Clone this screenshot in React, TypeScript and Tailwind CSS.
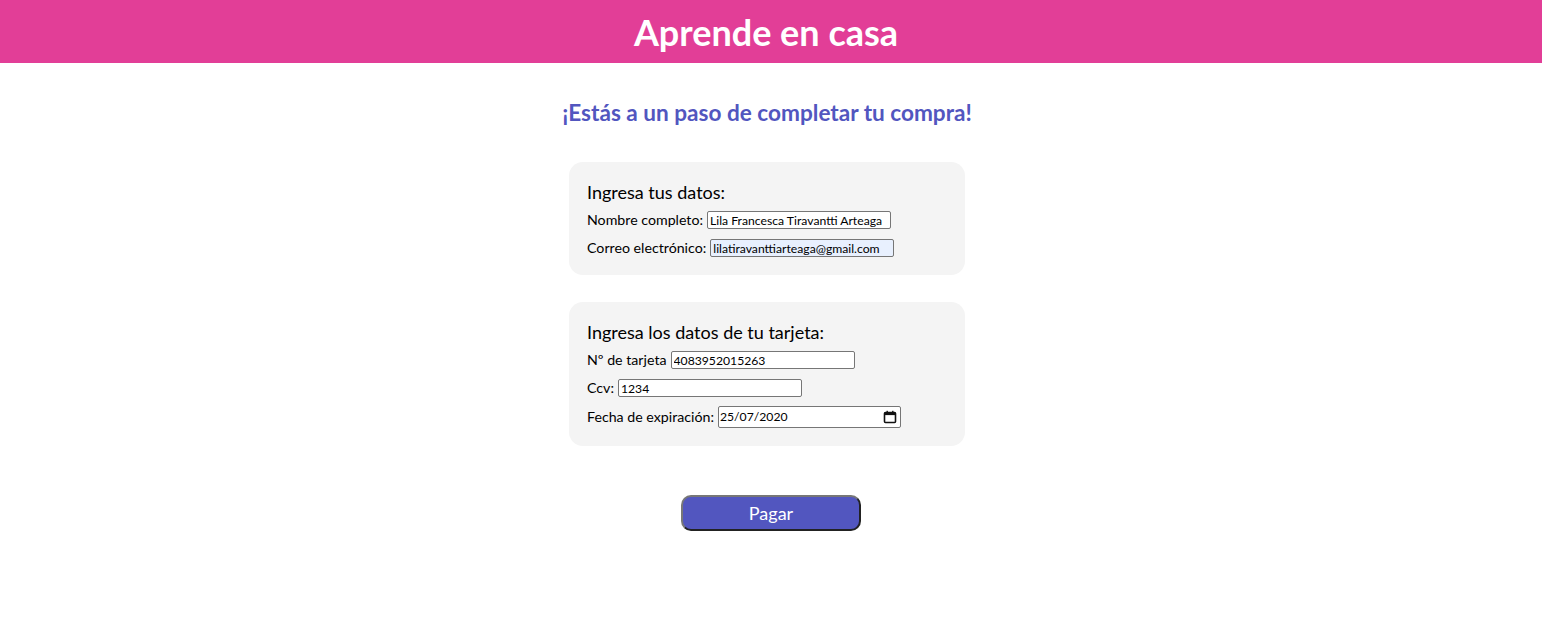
import React from "react";

const inputCls =
  "h-[18px] w-[184px] border border-[#767676] rounded-[2px] px-[2px] text-[12.2px] text-black outline-none leading-none";

function Row({ label, children, className = "" }: { label: string; children: React.ReactNode; className?: string }) {
  return (
    <div className={"flex items-center h-[28px] text-[14.2px] text-black " + className}>
      <span className="mr-[4px]">{label}</span>
      {children}
    </div>
  );
}

export default function App() {
  return (
    <div className="min-h-[621px] bg-white" style={{ fontFamily: "Lato, 'Open Sans', sans-serif" }}>
      <header className="h-[63px] bg-[#e23e97] flex items-center justify-center">
        <h1 className="text-[36px] font-bold text-white leading-none pr-[10px]">Aprende en casa</h1>
      </header>
      <div className="flex flex-col items-center pr-[8px]">
        <h2 className="mt-[35px] h-[30px] leading-[30px] text-[22.6px] font-bold text-[#5256bf]">
          ¡Estás a un paso de completar tu compra!
        </h2>
        <section className="mt-[34px] w-[396px] h-[113px] bg-[#f4f4f4] rounded-[14px] pl-[18px] pt-[18px]">
          <h3 className="text-[18px] leading-[24px] text-black">Ingresa tus datos:</h3>
          <Row label="Nombre completo:" className="mt-[2px]">
            <input readOnly className={inputCls + " bg-white"} defaultValue="Lila Francesca Tiravantti Arteaga" />
          </Row>
          <Row label="Correo electrónico:">
            <input readOnly className={inputCls + " bg-[#e8f0fe]"} defaultValue="lilatiravanttiarteaga@gmail.com" />
          </Row>
        </section>
        <section className="mt-[27px] w-[396px] h-[144px] bg-[#f4f4f4] rounded-[14px] pl-[18px] pt-[18px]">
          <h3 className="text-[18px] leading-[24px] text-black">Ingresa los datos de tu tarjeta:</h3>
          <Row label="Nº de tarjeta" className="mt-[2px]">
            <input readOnly className={inputCls + " bg-white"} defaultValue="4083952015263" />
          </Row>
          <Row label="Ccv:">
            <input readOnly className={inputCls + " bg-white"} defaultValue="1234" />
          </Row>
          <Row label="Fecha de expiración:" className="mt-[1px]">
            <div className="h-[22px] w-[183px] border border-[#767676] rounded-[2px] bg-white flex items-center justify-between pl-[1px] pr-[3px] text-[12.2px]">
              <span>25/07/2020</span>
              <svg width="14" height="14" viewBox="0 0 14 14" fill="none">
                <rect x="1.5" y="2.5" width="11" height="10" rx="1" stroke="#111" strokeWidth="1.6" />
                <rect x="1.5" y="2.5" width="11" height="2.6" fill="#111" />
                <rect x="3.5" y="0.8" width="1.4" height="2.5" fill="#111" />
                <rect x="9.1" y="0.8" width="1.4" height="2.5" fill="#111" />
              </svg>
            </div>
          </Row>
        </section>
      </div>
      <div className="flex justify-center mt-[49px]">
        <button className="w-[180px] h-[36px] rounded-[10px] bg-[#5256bf] text-white text-[18px] border-2 border-t-[#777777] border-l-[#777777] border-r-[#222222] border-b-[#222222]">
          Pagar
        </button>
      </div>
    </div>
  );
}
